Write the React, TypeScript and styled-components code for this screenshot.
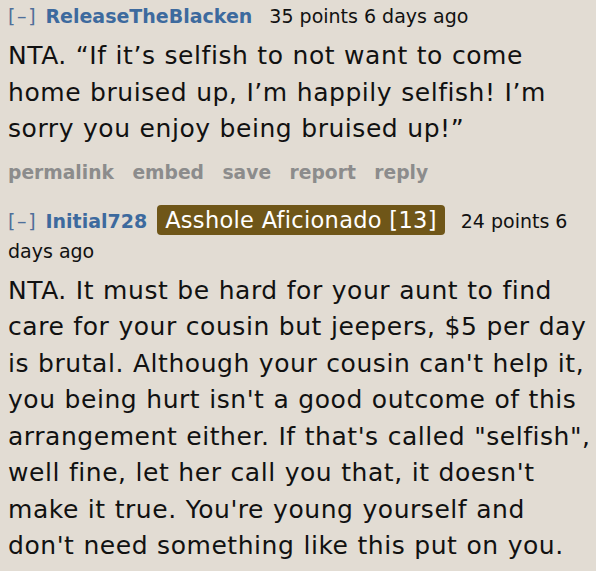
import React from "react";
import styled, { createGlobalStyle } from "styled-components";

const Global = createGlobalStyle`
  html, body { margin: 0; padding: 0; background: #e2dcd3; }
  body { font-family: "DejaVu Sans", Verdana, sans-serif; color: #111; }
`;

const Page = styled.div`
  width: 596px;
  height: 571px;
  overflow: hidden;
  box-sizing: border-box;
  padding: 1px 2px 0 8px;
  background: #e2dcd3;
`;

const Comment = styled.div`
  display: flex;
  flex-direction: column;
  margin-bottom: 22px;
`;

const Tagline = styled.div`
  font-size: 19px;
  line-height: 30px;
  color: #111;
`;

const Toggle = styled.span`
  color: #4f6f9a;
  letter-spacing: 1.7px;
  margin-right: 8px;
`;

const Author = styled.span`
  color: #3d6a9e;
  font-weight: bold;
  margin-right: 10px;
`;

const Meta = styled.span<{ $gap: number }>`
  margin-left: ${(p) => p.$gap}px;
`;

const Flair = styled.span`
  display: inline-block;
  background: #6f5618;
  color: #fff;
  font-size: 22.5px;
  letter-spacing: 0.3px;
  line-height: 30px;
  padding: 0 8px;
  border-radius: 4px;
  margin-right: 16px;
`;

const Body = styled.div`
  font-size: 25px;
  line-height: 36.5px;
  letter-spacing: 0.55px;
  word-spacing: 0.5px;
  margin-top: 7px;
`;

const Actions = styled.div`
  display: flex;
  gap: 18.5px;
  font-size: 18.7px;
  font-weight: bold;
  color: #8c8c8c;
  margin-top: 14px;
`;

export default function App() {
  return (
    <Page>
      <Global />
      <Comment>
        <Tagline>
          <Toggle>[–]</Toggle>
          <Author>ReleaseTheBlacken</Author>
          <Meta $gap={7}>35 points 6 days ago</Meta>
        </Tagline>
        <Body>
          NTA. “If it’s selfish to not want to come home bruised up, I’m happily selfish! I’m sorry you enjoy being bruised up!”
        </Body>
        <Actions>
          <span>permalink</span>
          <span>embed</span>
          <span>save</span>
          <span>report</span>
          <span>reply</span>
        </Actions>
      </Comment>
      <Comment>
        <Tagline>
          <Toggle>[–]</Toggle>
          <Author>Initial728</Author>
          <Flair>Asshole Aficionado [13]</Flair>
          <Meta $gap={0}>24 points 6 days ago</Meta>
        </Tagline>
        <Body>
          NTA. It must be hard for your aunt to find care for your cousin but jeepers, $5 per day is brutal. Although your cousin can't help it, you being hurt isn't a good outcome of this arrangement either. If that's called "selfish", well fine, let her call you that, it doesn't make it true. You're young yourself and don't need something like this put on you.
        </Body>
      </Comment>
    </Page>
  );
}
